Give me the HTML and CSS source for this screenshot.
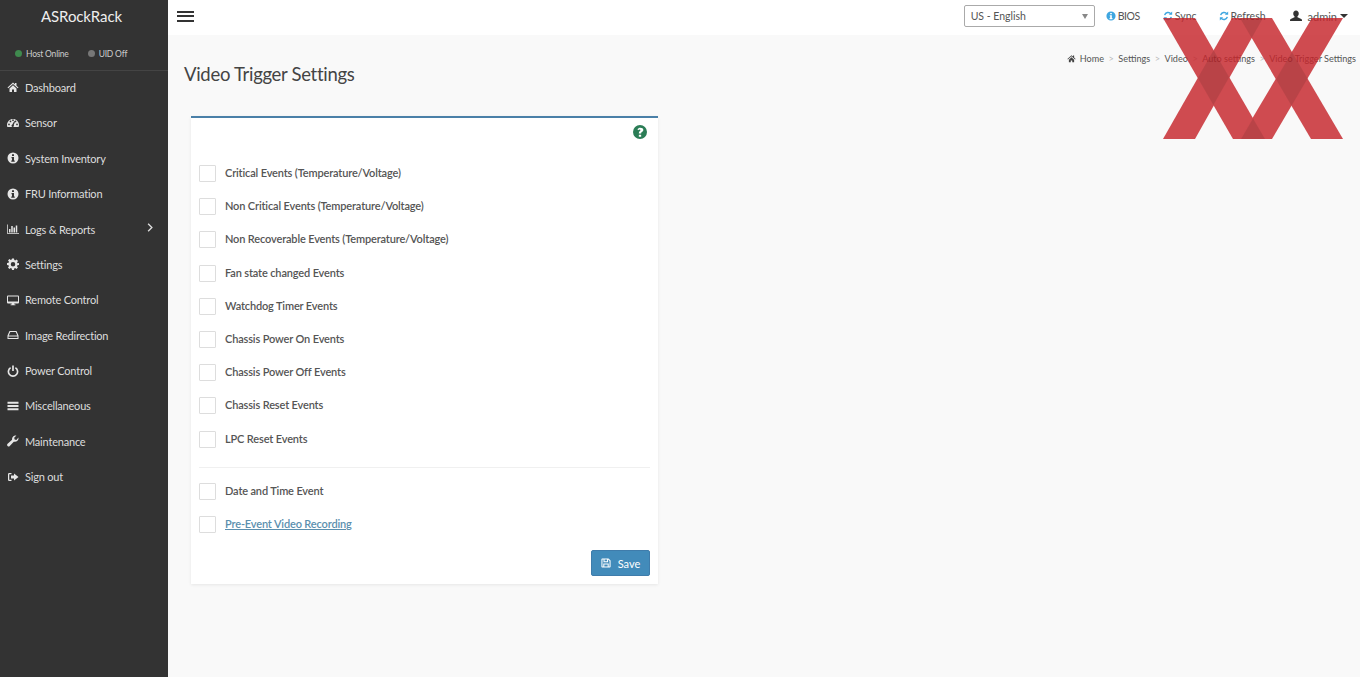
FILE: index.html
```html
<!DOCTYPE html>
<html lang="en">
<head>
    <meta charset="UTF-8">
    <meta name="viewport" content="width=device-width, initial-scale=1.0">
    <title>Video Trigger Settings</title>
    <link rel="stylesheet" href="styles.css">
</head>
<body>

    <aside class="sidebar">
        <div class="brand">ASRockRack</div>
        <div class="host-state">
            <span class="state"><i class="dot dot-green"></i>Host Online</span>
            <span class="state"><i class="dot dot-grey"></i>UID Off</span>
        </div>
        <nav class="menu">
            <a href="#"><svg class="ico" viewBox="0 0 24 24"><path d="M12 3 1 13l1.500 1.500L12 6l9.500 8.500L23 13l-4-3.600V4h-3v2.700zM5 15v7h5v-5h4v5h5v-7l-7-6.300z"/></svg>Dashboard</a>
            <a href="#"><svg class="ico" viewBox="0 0 24 24"><path fill-rule="evenodd" d="M12 4C5.400 4 0 9.400 0 16c0 1.500.3 2.800.8 4h22.400c.5-1.200.8-2.500.8-4 0-6.600-5.400-12-12-12zM4 16.500a1.700 1.700 0 1 1 0-3.400 1.700 1.700 0 0 1 0 3.400zm3-6a1.700 1.700 0 1 1 0-3.400 1.700 1.700 0 0 1 0 3.400zm5-2.500a1.700 1.700 0 1 1 0-3.400A1.700 1.700 0 0 1 12 8zm2 9.500a2.500 2.500 0 1 1-3.300-2.400L14.500 8l1.800.8-2.800 7zm3-7a1.700 1.700 0 1 1 0-3.400 1.700 1.700 0 0 1 0 3.400zm3 6a1.700 1.700 0 1 1 0-3.400 1.700 1.700 0 0 1 0 3.400z"/></svg>Sensor</a>
            <a href="#"><svg class="ico" viewBox="0 0 24 24"><path fill-rule="evenodd" d="M12 1a11 11 0 1 0 0 22 11 11 0 0 0 0-22zm-2 3.500h4v3.500h-4zM9 10h5v7h1.500v2.500h-7V17H10v-4.500H9z"/></svg>System Inventory</a>
            <a href="#"><svg class="ico" viewBox="0 0 24 24"><path fill-rule="evenodd" d="M12 1a11 11 0 1 0 0 22 11 11 0 0 0 0-22zm-2 3.500h4v3.500h-4zM9 10h5v7h1.500v2.500h-7V17H10v-4.500H9z"/></svg>FRU Information</a>
            <a href="#"><svg class="ico" viewBox="0 0 24 24"><path d="M0 3h1.500v17H24v1.500H0zM4 12h3v7H4zM8.500 6h3v13h-3zM13 9h3v10h-3zM17.500 5h3v14h-3z"/></svg>Logs &amp; Reports<svg class="chevron" viewBox="0 0 10 12"><path d="M2.500 1 7.500 6l-5 5" fill="none" stroke="currentColor" stroke-width="1.800"/></svg></a>
            <a href="#"><svg class="ico" viewBox="0 0 24 24"><path fill-rule="evenodd" d="M10 1h4l.6 3.200 1.900.8 2.700-1.800 2.800 2.800-1.800 2.700.8 1.900L24 10v4l-3.200.6-.8 1.900 1.800 2.700-2.800 2.800-2.700-1.800-1.900.8L14 24h-4l-.6-3.200-1.900-.8-2.700 1.800L2 19l1.800-2.700-.8-1.900L0 14v-4l3.200-.6.8-1.900L2 5l2.800-2.800 2.700 1.800 1.900-.8zm2 7a4.500 4.500 0 1 0 0 9 4.500 4.500 0 0 0 0-9z"/></svg>Settings</a>
            <a href="#"><svg class="ico" viewBox="0 0 24 24"><path fill-rule="evenodd" d="M2 3h20a2 2 0 0 1 2 2v12a2 2 0 0 1-2 2h-7.500l.5 2h2v1.500H7V21h2l.5-2H2a2 2 0 0 1-2-2V5a2 2 0 0 1 2-2zm0 2v10h20V5z"/></svg>Remote Control</a>
            <a href="#"><svg class="ico" viewBox="0 0 24 24"><path fill-rule="evenodd" d="M5 4h14l4 9v7H1v-7zm1.500 2-3 7h17l-3-7zM3 15v3h18v-3z"/></svg>Image Redirection</a>
            <a href="#"><svg class="ico" viewBox="0 0 24 24"><path d="M10.300 1h3.400v11h-3.400zM6.500 3.800 8 6.800a7.500 7.500 0 1 0 8 0l1.500-3A10.800 10.800 0 1 1 6.500 3.800z"/></svg>Power Control</a>
            <a href="#"><svg class="ico" viewBox="0 0 24 24"><path d="M1 3.500h22v4H1zM1 10h22v4H1zM1 16.500h22v4H1z"/></svg>Miscellaneous</a>
            <a href="#"><svg class="ico" viewBox="0 0 24 24"><path d="M23 6.500c0 4-3.200 7.200-7.200 7.200-.8 0-1.500-.1-2.200-.4L5.500 22a3 3 0 0 1-4.300-.1 3 3 0 0 1 0-4.200l9-8.300A7.200 7.200 0 0 1 18.800 1l-4.400 4.500.8 3.500 3.500.8L22.900 5c.1.500.1 1 .1 1.500z"/></svg>Maintenance</a>
            <a href="#"><svg class="ico" viewBox="0 0 24 24"><path d="M9 4H4.500A2.500 2.500 0 0 0 2 6.500v11A2.500 2.500 0 0 0 4.500 20H9v-2.500H4.500v-11H9zM14 5l9 7-9 7v-4H8V9h6z"/></svg>Sign out</a>
        </nav>
    </aside>

    <div class="page">
        <header class="topbar">
            <button class="burger" aria-label="Menu"><span></span><span></span><span></span></button>
            <div class="lang">
                <select>
                    <option>US - English</option>
                </select>
            </div>
            <a class="top-link bios" href="#"><svg class="ico-sm" viewBox="0 0 24 24"><path fill="#3ea6e0" fill-rule="evenodd" d="M12 1a11 11 0 1 0 0 22 11 11 0 0 0 0-22zm-2 3.500h4v3.500h-4zM9 10h5v7h1.500v2.500h-7V17H10v-4.500H9z"/></svg>BIOS</a>
            <a class="top-link sync" href="#"><svg class="ico-sm" viewBox="0 0 24 24"><path fill="none" stroke="#3ea6e0" stroke-width="3.500" d="M4 10a8.500 8.500 0 0 1 15-3M20 14a8.500 8.500 0 0 1-15 3"/><path fill="#3ea6e0" d="M22 1v8h-8zM2 23v-8h8z"/></svg>Sync</a>
            <a class="top-link refresh" href="#"><svg class="ico-sm" viewBox="0 0 24 24"><path fill="none" stroke="#3ea6e0" stroke-width="3.500" d="M4 10a8.500 8.500 0 0 1 15-3M20 14a8.500 8.500 0 0 1-15 3"/><path fill="#3ea6e0" d="M22 1v8h-8zM2 23v-8h8z"/></svg>Refresh</a>
            <a class="top-link user" href="#"><svg class="ico-user" viewBox="0 0 24 24"><path d="M12 1c3.300 0 5.500 2.700 5.500 6 0 2.500-1 4.500-2.500 5.700v2l7.500 3.300c1 .5 1.500 1.500 1.500 3v1H0v-1c0-1.500.5-2.500 1.500-3L9 14.700v-2C7.500 11.500 6.500 9.500 6.500 7c0-3.300 2.200-6 5.500-6z"/></svg>admin<i class="caret"></i></a>
        </header>

        <main class="content">
            <div class="title-row">
                <h1>Video Trigger Settings</h1>
                <ol class="crumbs">
                    <li><svg class="ico-home" viewBox="0 0 24 24"><path d="M12 3 1 13l1.500 1.500L12 6l9.500 8.500L23 13l-4-3.600V4h-3v2.700zM5 15v7h5v-5h4v5h5v-7l-7-6.300z"/></svg>Home</li>
                    <li>Settings</li>
                    <li>Video</li>
                    <li>Auto settings</li>
                    <li>Video Trigger Settings</li>
                </ol>
            </div>

            <section class="card">
                <div class="help-row">
                    <svg class="help" viewBox="0 0 24 24"><path fill="#2b7d56" fill-rule="evenodd" d="M12 0a12 12 0 1 0 0 24 12 12 0 0 0 0-24zm2 20h-4v-3.500h4zm2.800-9.500c-.8 1.100-2.800 1.700-2.800 3.500v.7h-4v-1c0-2.700 2.800-3.300 2.800-4.700 0-.7-.6-1.100-1.400-1.100-.9 0-1.600.5-2.200 1.300L7.600 7.300C8.700 5.700 10.300 4.500 12.700 4.500c2.800 0 5 1.500 5 4 0 .8-.4 1.400-.9 2z"/></svg>
                </div>

                <label class="check"><input type="checkbox">Critical Events (Temperature/Voltage)</label>
                <label class="check"><input type="checkbox">Non Critical Events (Temperature/Voltage)</label>
                <label class="check"><input type="checkbox">Non Recoverable Events (Temperature/Voltage)</label>
                <label class="check"><input type="checkbox">Fan state changed Events</label>
                <label class="check"><input type="checkbox">Watchdog Timer Events</label>
                <label class="check"><input type="checkbox">Chassis Power On Events</label>
                <label class="check"><input type="checkbox">Chassis Power Off Events</label>
                <label class="check"><input type="checkbox">Chassis Reset Events</label>
                <label class="check"><input type="checkbox">LPC Reset Events</label>

                <hr class="divider">

                <label class="check"><input type="checkbox">Date and Time Event</label>
                <label class="check"><input type="checkbox"><a href="#">Pre-Event Video Recording</a></label>

                <div class="actions">
                    <button class="save"><svg class="ico-save" viewBox="0 0 24 24"><path fill-rule="evenodd" d="M3 1h15l5 5v15a2 2 0 0 1-2 2H3a2 2 0 0 1-2-2V3a2 2 0 0 1 2-2zm.5 2.500v17h2V13h13v7.500h2V7l-3.500-3.500H17V10H6V3.500zM8.500 3.500V8h6V3.500zM8 15.500v5h8v-5z"/></svg>Save</button>
                </div>
            </section>
        </main>
    </div>

    <!-- filigrane par dessus la page -->
    <svg class="watermark" viewBox="0 0 180 121">
        <g class="bars">
            <polygon points="0,0 32,0 102,121 70,121"/>
            <polygon points="69,0 100,0 32,121 0,121"/>
            <polygon points="77,0 109,0 180,121 148,121"/>
            <polygon points="149,0 180,0 109,121 77,121"/>
        </g>
        <g class="crossings">
            <polygon points="50.600,32.200 66.200,59.200 50.400,87 34.800,60"/>
            <polygon points="129,34 144.500,60.500 128.500,87.800 113,61.300"/>
            <polygon points="77,0 100,0 88.700,19.900"/>
            <polygon points="90,100.400 102,121 78,121"/>
        </g>
    </svg>

</body>
</html>
```

FILE: styles.css
```css
/* Global */
* {
    box-sizing: border-box;
}

html, body {
    height: 100%;
}

body {
    font-family: 'Lato', 'Open Sans', sans-serif;
    font-size: 12px;
    background-color: #f9f9f9;
    color: #444;
    margin: 0;
    display: flex;
    overflow: hidden;
}

a {
    text-decoration: none;
}

/* Sidebar */
.sidebar {
    width: 168px;
    flex-shrink: 0;
    background-color: #333;
    color: #ddd;
}

.brand {
    height: 35px;
    color: #eee;
    font-size: 15px;
    letter-spacing: -0.1px;
    line-height: 32px;
    text-align: center;
    padding-right: 5px;
}

.host-state {
    height: 36px;
    border-bottom: 1px solid #444;
    display: flex;
    align-items: center;
    gap: 19px;
    padding: 2px 0 0 15px;
    font-size: 8.500px;
    letter-spacing: -0.2px;
    color: #ccc;
}

.state {
    display: flex;
    align-items: center;
}

.dot {
    width: 7px;
    height: 7px;
    border-radius: 50%;
    margin-right: 4px;
}

.dot-green {
    background-color: #3f8a4e;
}

.dot-grey {
    background-color: #777;
}

.menu {
    display: flex;
    flex-direction: column;
}

.menu a {
    height: 35.4px;
    display: flex;
    align-items: center;
    color: #ddd;
    padding: 0 0 2.500px 6.500px;
    font-size: 11px;
    letter-spacing: -0.2px;
}

.ico {
    width: 12px;
    height: 12px;
    margin-right: 6.500px;
    fill: #e6e6e6;
    flex-shrink: 0;
}

.chevron {
    width: 8px;
    height: 9px;
    margin-left: auto;
    margin-right: 14px;
    margin-top: -3px;
}

/* Top bar */
.page {
    flex: 1;
    min-width: 0;
}

.topbar {
    height: 35px;
    background-color: #fff;
    display: flex;
    align-items: center;
    padding-bottom: 3px;
}

.burger {
    width: 17px;
    height: 11px;
    margin-left: 9px;
    padding: 0;
    border: 0;
    background: none;
    display: flex;
    flex-direction: column;
    justify-content: space-between;
}

.burger span {
    display: block;
    height: 2px;
    width: 100%;
    background-color: #333;
}

.lang {
    margin-left: auto;
    width: 131px;
    height: 22px;
    position: relative;
}

.lang::after {
    content: "";
    position: absolute;
    right: 7px;
    top: 9px;
    border-left: 3.500px solid transparent;
    border-right: 3.500px solid transparent;
    border-top: 5px solid #888;
}

.lang select {
    appearance: none;
    width: 100%;
    height: 100%;
    border: 1px solid #aaa;
    border-radius: 2px;
    background-color: #fff;
    padding: 0 6px;
    font: inherit;
    font-size: 10.500px;
    color: #555;
}

.top-link {
    display: flex;
    align-items: center;
    color: #555;
    font-size: 10.500px;
}

.bios {
    margin-left: 11px;
    letter-spacing: -0.4px;
}

.sync {
    margin-left: 23px;
}

.refresh {
    margin-left: 22px;
}

.user {
    margin-left: 24px;
    margin-right: 12px;
    font-size: 11px;
}

.ico-sm {
    width: 10px;
    height: 10px;
    margin-right: 2px;
}

.ico-user {
    width: 12px;
    height: 12px;
    margin-right: 6px;
    fill: #333;
}

.caret {
    margin-left: 3px;
    border-left: 4px solid transparent;
    border-right: 4px solid transparent;
    border-top: 4px solid #333;
}

/* Content */
.content {
    padding: 0 4px 0 16px;
}

.title-row {
    height: 81px;
    display: flex;
    justify-content: space-between;
    align-items: flex-start;
}

h1 {
    font-size: 18.500px;
    letter-spacing: -0.3px;
    font-weight: 400;
    color: #444;
    margin: 27px 0 0;
    line-height: 24px;
}

.crumbs {
    list-style: none;
    margin: 18px 0 0;
    padding: 0;
    display: flex;
    font-size: 9.100px;
    line-height: 12px;
    color: #555;
}

.crumbs li + li::before {
    content: ">";
    color: #bbb;
    margin: 0 4.500px;
}

.ico-home {
    width: 9px;
    height: 9px;
    margin-right: 4px;
    fill: #444;
    vertical-align: -1px;
}

/* Card */
.card {
    width: 467px;
    height: 468px;
    margin-left: 7px;
    padding: 0 8px;
    background-color: #fff;
    border-top: 2px solid #4a80a8;
    box-shadow: 0 1px 3px rgba(0, 0, 0, 0.08);
}

.help-row {
    height: 38px;
    display: flex;
    justify-content: flex-end;
    padding: 7px 3px 0 0;
}

.help {
    width: 14px;
    height: 14px;
}

.check {
    height: 33.2px;
    display: flex;
    align-items: center;
    font-size: 11px;
    font-weight: 600;
    letter-spacing: -0.15px;
    color: #555;
}

.check input {
    appearance: none;
    width: 17px;
    height: 17px;
    margin: 2px 9px 0 0;
    background-color: #fff;
    border: 1px solid #ddd;
    border-radius: 1px;
}

.check a {
    color: #5b8fae;
    text-decoration: underline;
}

.divider {
    border: 0;
    border-top: 1px solid #f0f0f0;
    margin: 12px 0 6px;
}

.actions {
    display: flex;
    justify-content: flex-end;
    margin-top: 10px;
}

.save {
    width: 59px;
    height: 26px;
    border: 1px solid #3f7cab;
    border-radius: 2px;
    background-color: #428bba;
    color: #fff;
    font: inherit;
    font-size: 11px;
    display: flex;
    align-items: center;
    justify-content: center;
}

.ico-save {
    width: 10px;
    height: 10px;
    margin-right: 7px;
    fill: #fff;
}

/* Watermark, lies over the page */
.watermark {
    position: absolute;
    left: 1163px;
    top: 18px;
    width: 180px;
    height: 121px;
    pointer-events: none;
}

.bars {
    fill: #c6252b;
    opacity: 0.82;
}

.crossings {
    fill: rgba(0, 0, 0, 0.1);
}
```
